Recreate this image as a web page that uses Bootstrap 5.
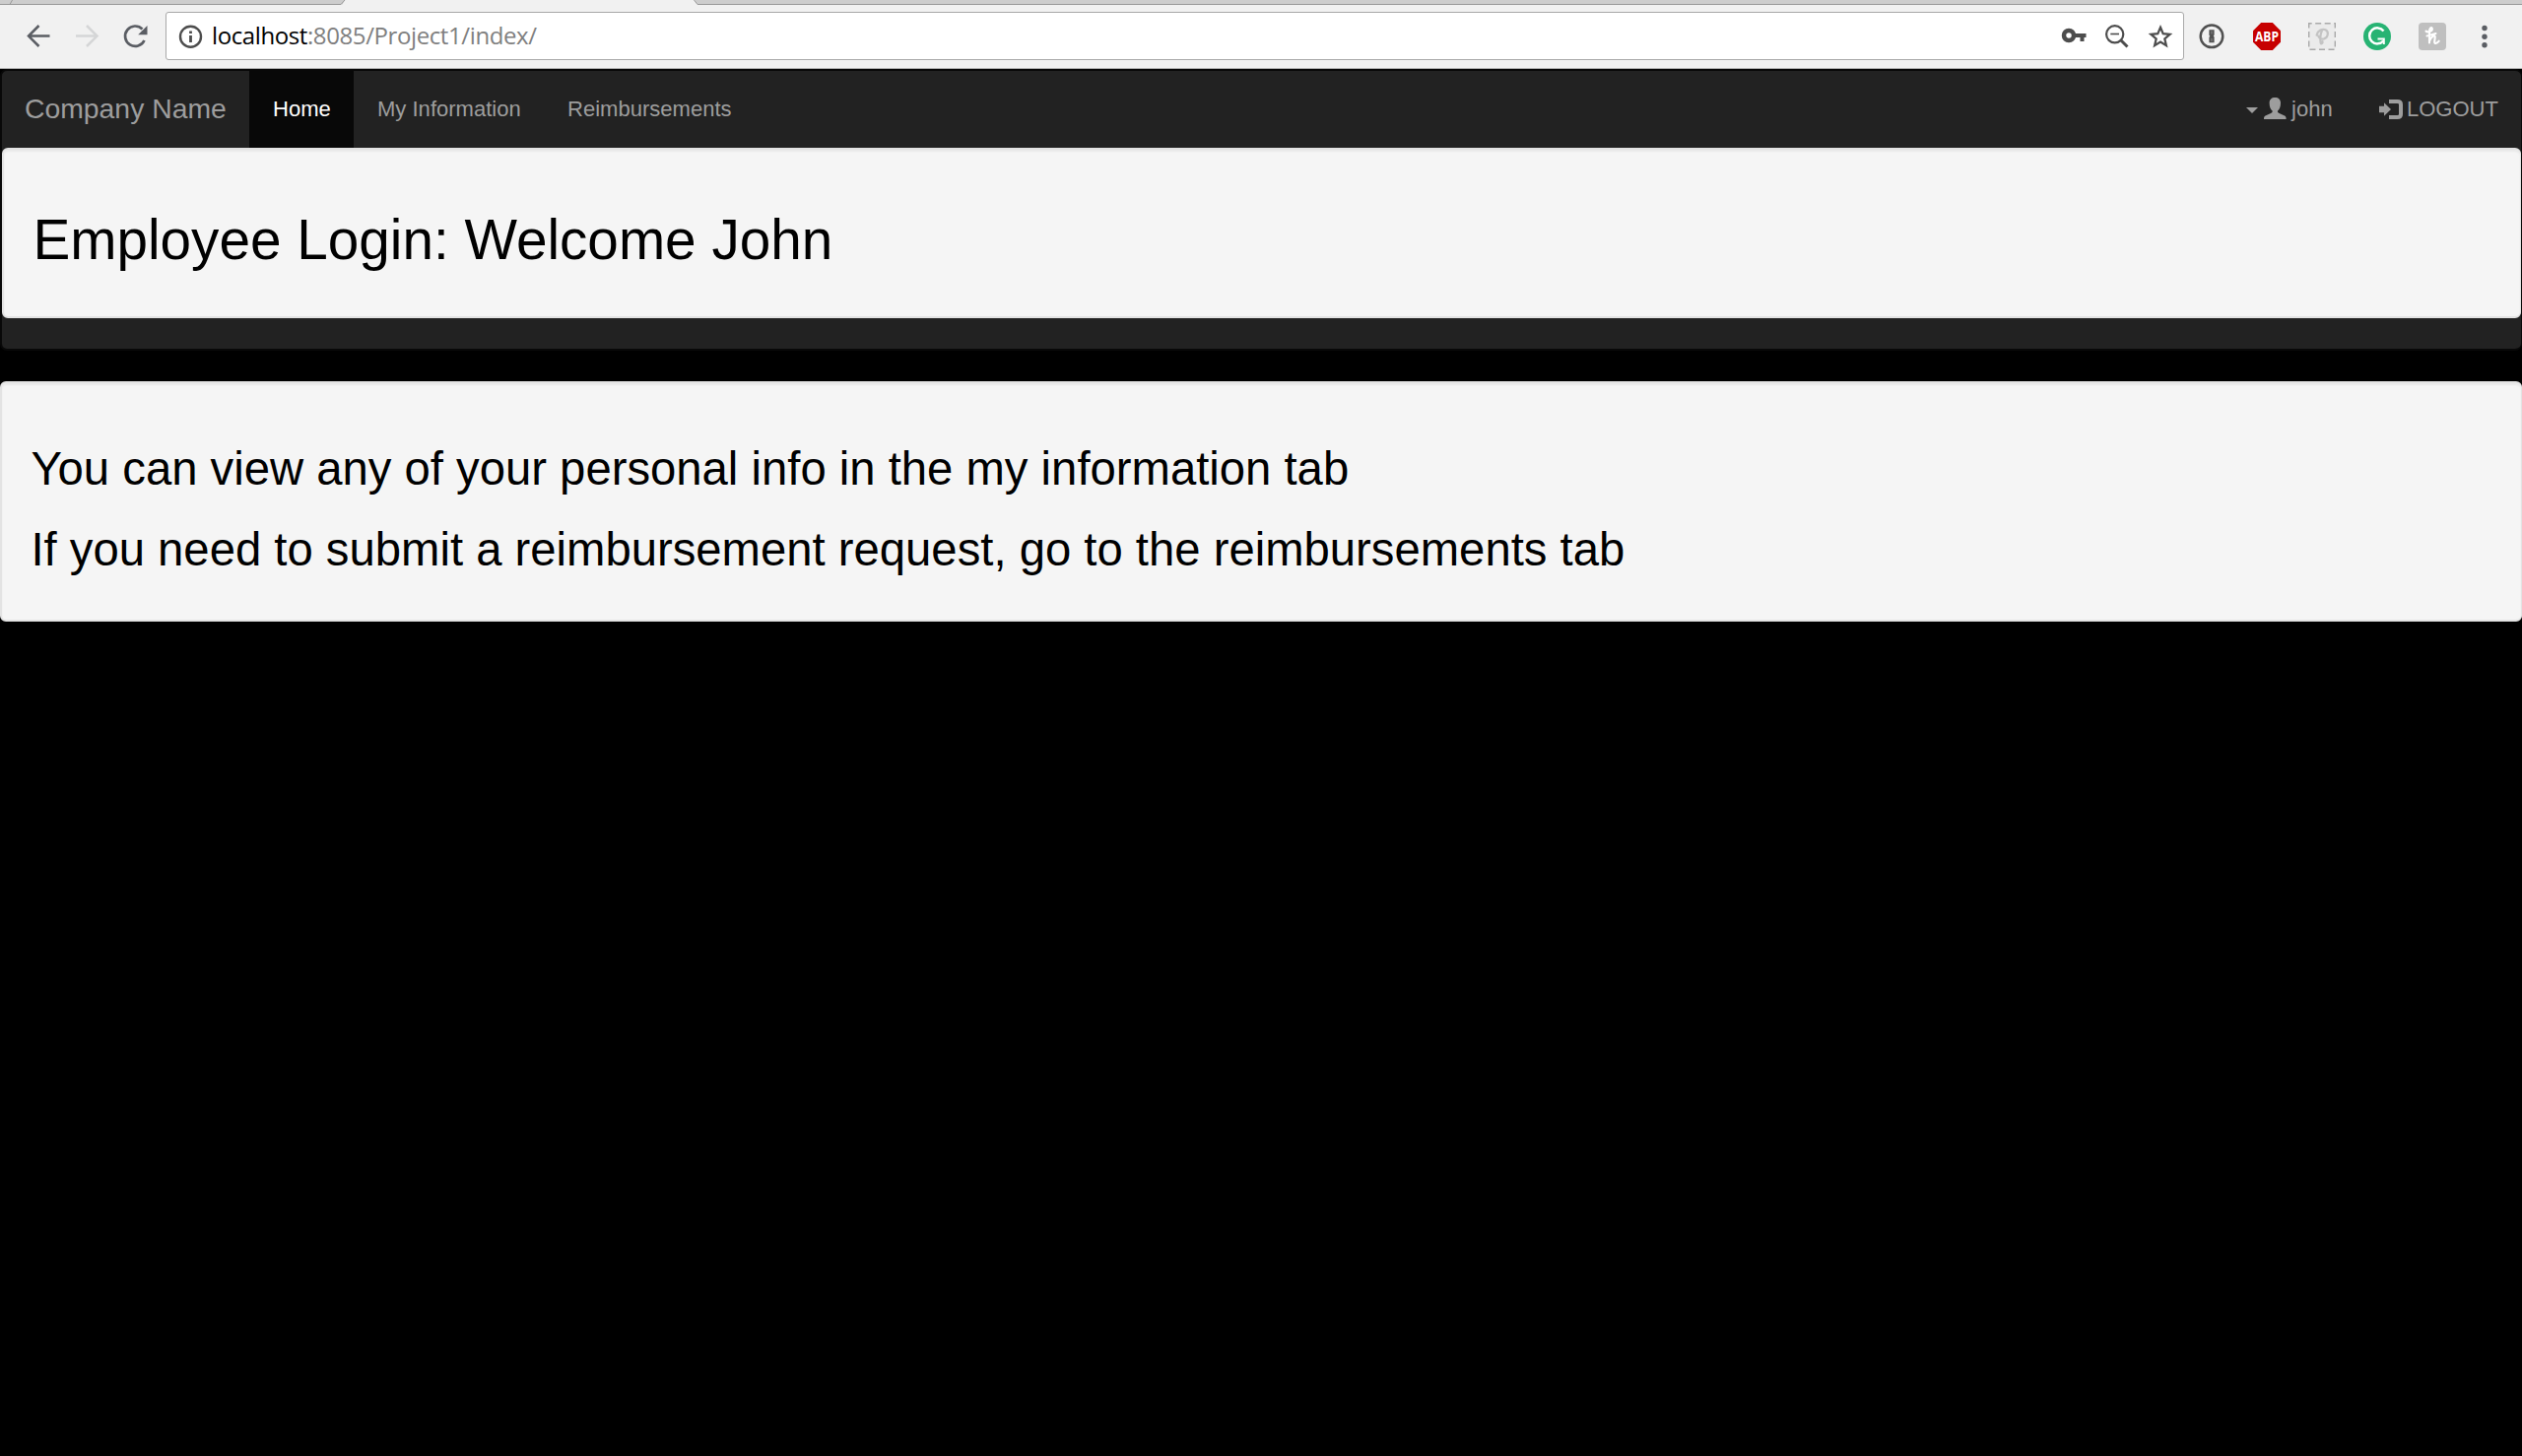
<!DOCTYPE html>
<html lang="en">
<head>
<meta charset="utf-8">
<title>Company Name</title>
<link href="https://cdn.jsdelivr.net/npm/bootstrap@5.3.0/dist/css/bootstrap.min.css" rel="stylesheet">
<style>
body{background:#000;color:#000;font-family:"Liberation Sans",Arial,sans-serif;font-size:22.05px;line-height:31.5px;overflow:hidden}
svg{display:block;flex:none;overflow:visible}
.tabstrip{height:5px;background:#f1f1f1}
.toolbar{height:65px;background:#f1f1f1;border-bottom:1px solid #b1b1b1;padding:0 24px 1px 23px}
.nav-icons{gap:17px;margin-right:15px}
.omnibox{height:49px;background:#fff;border:1px solid #a9a9a9;border-radius:3px;padding:0 9px 0 10px}
.omni-icons{gap:16px}
.ext-icons{gap:28px;margin:0 25px 0 14px}
.url{font-family:"Open Sans","Noto Sans",sans-serif;font-size:24px;letter-spacing:-.4px;line-height:32px;color:#808080;margin:-2px 0 0 7px;white-space:nowrap}
.url span{color:#000}
.site-nav{background:#222;border:2px solid #080808;border-right-width:1px;border-radius:7px;margin-bottom:31px;padding:0 0 31px}
.site-nav .menu-row{height:78px}
.site-nav .navbar-brand{font-size:28.35px;line-height:31.5px;color:#9d9d9d;padding:0 23.6px 0 23px;margin:0}
.site-nav .nav-link{color:#9d9d9d;padding:23px 23.6px 23.5px;line-height:31.5px;height:78px}
.site-nav .nav-link.active{background:#080808;color:#fff}
.site-nav .with-icon{display:flex;align-items:center}
.site-nav .with-icon:last-child{padding-right:23px}
.drop-caret{border-top:6px solid #9d9d9d;border-left:6.3px solid transparent;border-right:6.3px solid transparent;margin:3px 6px 0 0}
.panel-well{background:#f5f5f5;border:2px solid #e3e3e3;border-right-width:1px;border-radius:6px;box-shadow:inset 0 2px 2px rgba(0,0,0,.05);padding:30px 29.4px}
.panel-well h1{font-size:56.7px;line-height:62px;font-weight:400;margin:31px 0 16px}
.panel-well h2{font-size:47.25px;line-height:52px;font-weight:400;margin:31px 0 0}
.panel-well h2:last-child{margin:30px 0 15px}
</style>
<script src="https://cdn.jsdelivr.net/npm/bootstrap@5.3.0/dist/js/bootstrap.bundle.min.js"></script>
</head>
<body>
<header>
  <div class="tabstrip">
    <svg width="2560" height="5" viewBox="0 0 2560 5">
      <path d="M0 0H12L10 4.5H0zM12 0H350L347.5 4.5H10zM705 0H2560V4.5H708z" fill="#cdcdcd"/>
      <path d="M12.500 0L10 4.500H0M10 4.500H346L350 0M704.500 0L708 4.500H2560" fill="none" stroke="#999"/>
    </svg>
  </div>
  <div class="toolbar d-flex align-items-center">
    <div class="nav-icons d-flex">
      <svg width="32" height="29" fill="none" stroke="#5a5d63" stroke-width="2.500"><path d="M27.500 14.600H6M16.500 4L6 14.600L16.500 25"/></svg>
      <svg width="32" height="29" fill="none" stroke="#d5d6d7" stroke-width="2.500"><path d="M5 14.600H26.500M16 4L26.500 14.600L16 25"/></svg>
      <svg width="32" height="29"><path d="M25.500 19A10.200 10.200 0 1 1 23.500 7.500" fill="none" stroke="#5a5d63" stroke-width="2.700"/><path d="M28.500 4V13.200H19.200z" fill="#5a5d63"/></svg>
    </div>
    <div class="omnibox d-flex align-items-center flex-grow-1">
      <svg width="29" height="29"><circle cx="14.500" cy="15.200" r="10.500" fill="none" stroke="#4d4d4d" stroke-width="2.400"/><path d="M13.100 9.500h2.800v2.600h-2.800zM13.100 14h2.800v7h-2.800z" fill="#4d4d4d"/></svg>
      <div class="url flex-grow-1"><span>localhost</span>:8085/Project1/index/</div>
      <div class="omni-icons d-flex">
        <svg width="28" height="29"><circle cx="9" cy="14" r="5" fill="none" stroke="#4d4d4d" stroke-width="4.500"/><path d="M14 12H26.500V16H24.500V20H20.500V16H14z" fill="#4d4d4d"/></svg>
        <svg width="28" height="29" fill="none" stroke="#4d4d4d"><circle cx="11.700" cy="12.800" r="8.600" stroke-width="2.200"/><path d="M7.300 12.500H16" stroke-width="1.600"/><path d="M18 19L24.500 25.500" stroke-width="3"/></svg>
        <svg width="28" height="29"><path d="M14 5.800L16.700 12.200L23.600 12.800L18.300 17.300L19.900 24.200L14 20.600L8.100 24.200L9.700 17.300L4.400 12.800L11.300 12.200z" fill="none" stroke="#4d4d4d" stroke-width="2.200"/></svg>
      </div>
    </div>
    <div class="ext-icons d-flex">
      <svg width="28" height="29"><circle cx="14" cy="14.800" r="11.300" fill="none" stroke="#505050" stroke-width="2.500"/><path d="M11.400 8.300H16.600V13.500L15.700 14.500L16.600 15.400V21.300H11.400V15.800L12.300 14.800L11.400 13.800z" fill="#505050"/><path d="M14 9.500V12.500M14 17V20" stroke="#888" stroke-width="1"/></svg>
      <svg width="28" height="29"><path d="M8.200 1H19.800L28 9.200V20.800L19.800 29H8.200L0 20.800V9.200z" fill="#c70000"/><text x="14" y="19.800" text-anchor="middle" textLength="24" lengthAdjust="spacingAndGlyphs" font-family="Open Sans,sans-serif" font-size="14.500" font-weight="700" fill="#fff">ABP</text></svg>
      <svg width="28" height="29" fill="none"><rect x=".7" y="1.700" width="26.600" height="26.600" fill="#ebebeb" stroke="#a9a9a9" stroke-width="1.400" stroke-dasharray="6 3.500" stroke-dashoffset="3"/><path d="M14.300 8.300C12.500 12 12 17 12.600 21.500C13 23.500 15 22 14.500 20M8.600 13.600C9.500 9 14 7.300 17.500 8.200C21.500 10 20 16.500 16 17.400C12.500 18 10.500 16.300 10.300 14.500" stroke="#c3c3c3" stroke-width="2.200" stroke-linecap="round"/></svg>
      <svg width="28" height="29" fill="none"><circle cx="14" cy="15" r="14" fill="#27b373"/><path d="M20.500 9.500A8 8 0 1 0 20.300 19.500" stroke="#fff" stroke-width="2.500"/><path d="M14.500 17.500H20.800V23" stroke="#fff" stroke-width="2"/></svg>
      <svg width="28" height="29" fill="none"><rect y="1" width="28" height="28" rx="4" fill="#bfbfbf"/><path d="M7.500 9.500C9 11.500 14.500 9.500 13.800 7C13 5 11 6.500 11 10V21.500M11 20C12.500 15.500 16 13 16.700 15C17 17 15 22.500 17.500 22C19 21.800 20 20.500 20.700 19.700M8.500 14.500L17.500 12" stroke="#fff" stroke-width="2.100" stroke-linecap="round"/></svg>
    </div>
    <svg width="28" height="29" fill="#5a5d63"><circle cx="14" cy="6.500" r="2.700"/><circle cx="14" cy="15.200" r="2.700"/><circle cx="14" cy="23.800" r="2.700"/></svg>
  </div>
</header>

<nav class="site-nav">
  <div class="menu-row d-flex align-items-start">
    <a class="navbar-brand align-self-center" href="#">Company Name</a>
    <div class="nav flex-nowrap me-auto">
      <a class="nav-link active" href="#">Home</a>
      <a class="nav-link" href="#">My Information</a>
      <a class="nav-link" href="#">Reimbursements</a>
    </div>
    <div class="nav flex-nowrap">
      <a class="nav-link with-icon" href="#"><span class="drop-caret"></span><svg class="me-1" width="24" height="22" fill="#9d9d9d"><path d="M11.300 -1C7.800 -1 5.600 1 5.600 4.500c0 4 1.200 6.500 3 8 .3 1.300-.3 2-1.600 2.600L1.500 17.600C.4 18.200 0 19 0 21h22.600c0-2-.4-2.800-1.500-3.400l-5.500-2.500c-1.300-.6-1.900-1.300-1.600-2.600 1.800-1.500 3-4 3-8C17 1 14.800 -1 11.300 -1z"/></svg>john</a>
      <a class="nav-link with-icon" href="#"><svg class="me-1" width="24" height="20"><path d="M0 6.700H5V3.300L12 10L5 16.700V13.200H0z" fill="#9d9d9d"/><path d="M10 2H18.500Q22 2 22 5V15Q22 18 18.500 18H10" fill="none" stroke="#9d9d9d" stroke-width="4"/></svg>LOGOUT</a>
    </div>
  </div>
  <div class="panel-well">
    <h1>Employee Login: Welcome John</h1>
  </div>
</nav>

<main class="panel-well">
  <h2>You can view any of your personal info in the my information tab</h2>
  <h2>If you need to submit a reimbursement request, go to the reimbursements tab</h2>
</main>
</body>
</html>
